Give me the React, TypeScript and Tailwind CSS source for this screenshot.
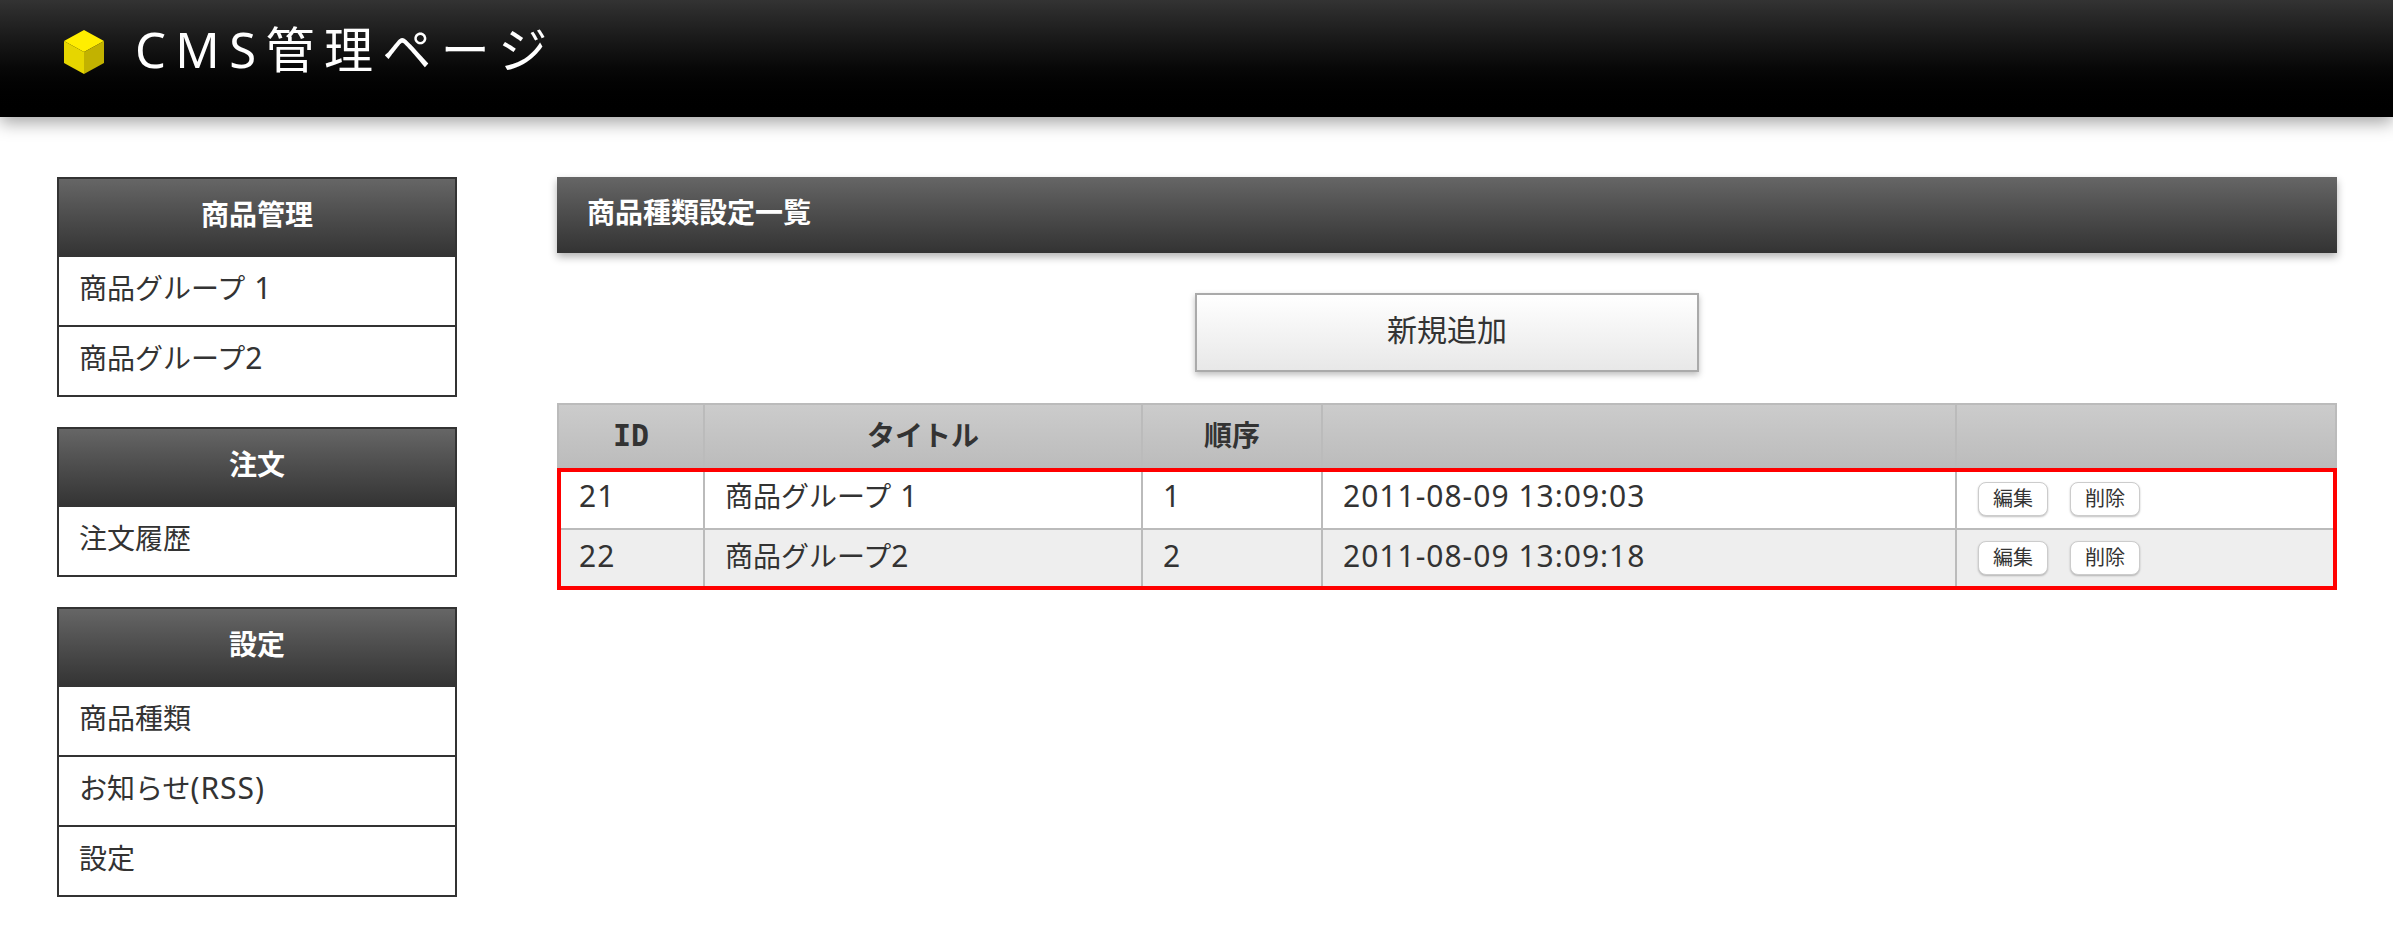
const nav = [
  { title: "商品管理", items: ["商品グループ 1", "商品グループ2"] },
  { title: "注文", items: ["注文履歴"] },
  { title: "設定", items: ["商品種類", "お知らせ(RSS)", "設定"] },
];

const rows = [
  { id: "21", title: "商品グループ 1", order: "1", date: "2011-08-09 13:09:03" },
  { id: "22", title: "商品グループ2", order: "2", date: "2011-08-09 13:09:18" },
];

function Mixed({ text }: { text: string }) {
  const parts = text.split(/([\x20-\x7e]+)/).filter(Boolean);
  return (
    <>
      {parts.map((part, i) =>
        /^[\x20-\x7e]+$/.test(part) ? (
          <span key={i} className="text-[30px] leading-none tracking-[1px]">
            {part}
          </span>
        ) : (
          <span key={i}>{part}</span>
        ),
      )}
    </>
  );
}

function Cube() {
  return (
    <svg width="40" height="44" viewBox="0 0 40 44" className="shrink-0 blur-[0.4px]">
      <polygon points="20,0 40,11 20,22 0,11" fill="#ffee00" />
      <polygon points="0,11 20,22 20,44 0,33" fill="#e6d600" />
      <polygon points="40,11 20,22 20,44 40,33" fill="#c2b200" />
    </svg>
  );
}

function SmallButton({ label }: { label: string }) {
  return (
    <button className="h-[34px] w-[70px] rounded-lg border border-[#ccc] bg-white text-[20px] leading-none text-[#333] shadow-[0_1px_2px_rgba(0,0,0,0.25)]">
      {label}
    </button>
  );
}

export default function App() {
  return (
    <div className="min-h-[950px] bg-white font-['Noto_Sans','Noto_Sans_CJK_JP',sans-serif] text-[28px] text-[#333]">
      <header className="flex h-[117px] items-start gap-[31px] bg-gradient-to-b from-[#333333] to-black pl-[64px] pt-[30px] shadow-[0_6px_16px_rgba(0,0,0,0.35)]">
        <Cube />
        <h1 className="-mt-[3px] text-[49px] leading-[44px] tracking-[9.4px] text-white">CMS管理ページ</h1>
      </header>

      <div className="flex items-start pl-[57px] pr-[56px] pt-[60px]">
        <aside className="flex w-[400px] shrink-0 flex-col gap-[30px]">
          {nav.map((section) => (
            <section key={section.title} className="border-2 border-[#333]">
              <h2 className="flex h-[78px] items-center justify-center bg-gradient-to-b from-[#666666] to-[#333333] pb-[8px] font-bold text-white">
                {section.title}
              </h2>
              <ul className="divide-y-2 divide-[#333]">
                {section.items.map((item) => (
                  <li key={item} className="flex h-[70px] items-start pl-[20px] pt-[13px] leading-[36px] last:h-[68px]">
                    <div>
                      <Mixed text={item} />
                    </div>
                  </li>
                ))}
              </ul>
            </section>
          ))}
        </aside>

        <main className="ml-[100px] min-w-0 flex-1">
          <h2 className="flex h-[76px] items-center bg-gradient-to-b from-[#666666] to-[#333333] pb-[6px] pl-[30px] font-bold text-white shadow-[0_4px_8px_rgba(0,0,0,0.3)]">
            商品種類設定一覧
          </h2>

          <div className="mt-[40px] flex justify-center">
            <button className="h-[79px] w-[504px] border-2 border-[#aaa] bg-gradient-to-b from-white to-[#e8e8e8] pb-[6px] text-[30px] text-[#333] shadow-[0_3px_6px_rgba(0,0,0,0.25)]">
              新規追加
            </button>
          </div>

          <div className="relative mt-[31px]">
            <table className="w-full table-fixed border-collapse">
              <colgroup>
                <col className="w-[146px]" />
                <col className="w-[438px]" />
                <col className="w-[180px]" />
                <col className="w-[634px]" />
                <col />
              </colgroup>
              <thead>
                <tr className="h-[65px] bg-gradient-to-b from-[#cccccc] to-[#bbbbbb]">
                  <th className="border-2 border-[#bbb] pb-[3px] font-['DejaVu_Sans_Mono',monospace] text-[30px] font-bold">ID</th>
                  <th className="border-2 border-[#bbb] pb-[3px] font-bold">タイトル</th>
                  <th className="border-2 border-[#bbb] pb-[3px] font-bold">順序</th>
                  <th className="border-2 border-[#bbb]"></th>
                  <th className="border-2 border-[#bbb]"></th>
                </tr>
              </thead>
              <tbody>
                {rows.map((row, i) => (
                  <tr key={row.id} className={i === 0 ? "h-[60px] bg-white" : "h-[60px] bg-[#eeeeee]"}>
                    <td className="border-2 border-[#bbb] pb-[6px] pl-[20px]"><Mixed text={row.id} /></td>
                    <td className="border-2 border-[#bbb] pb-[6px] pl-[20px]"><Mixed text={row.title} /></td>
                    <td className="border-2 border-[#bbb] pb-[6px] pl-[20px]"><Mixed text={row.order} /></td>
                    <td className="border-2 border-[#bbb] pb-[6px] pl-[20px]"><Mixed text={row.date} /></td>
                    <td className={i === 0 ? "border-2 border-[#bbb] pl-[21px]" : "border-2 border-[#bbb] pb-[2px] pl-[21px]"}>
                      <div className="flex gap-[22px]">
                        <SmallButton label="編集" />
                        <SmallButton label="削除" />
                      </div>
                    </td>
                  </tr>
                ))}
              </tbody>
            </table>
            <div className="pointer-events-none absolute inset-x-0 top-[65px] h-[122px] border-4 border-[#ff0000]" />
          </div>
        </main>
      </div>
    </div>
  );
}
